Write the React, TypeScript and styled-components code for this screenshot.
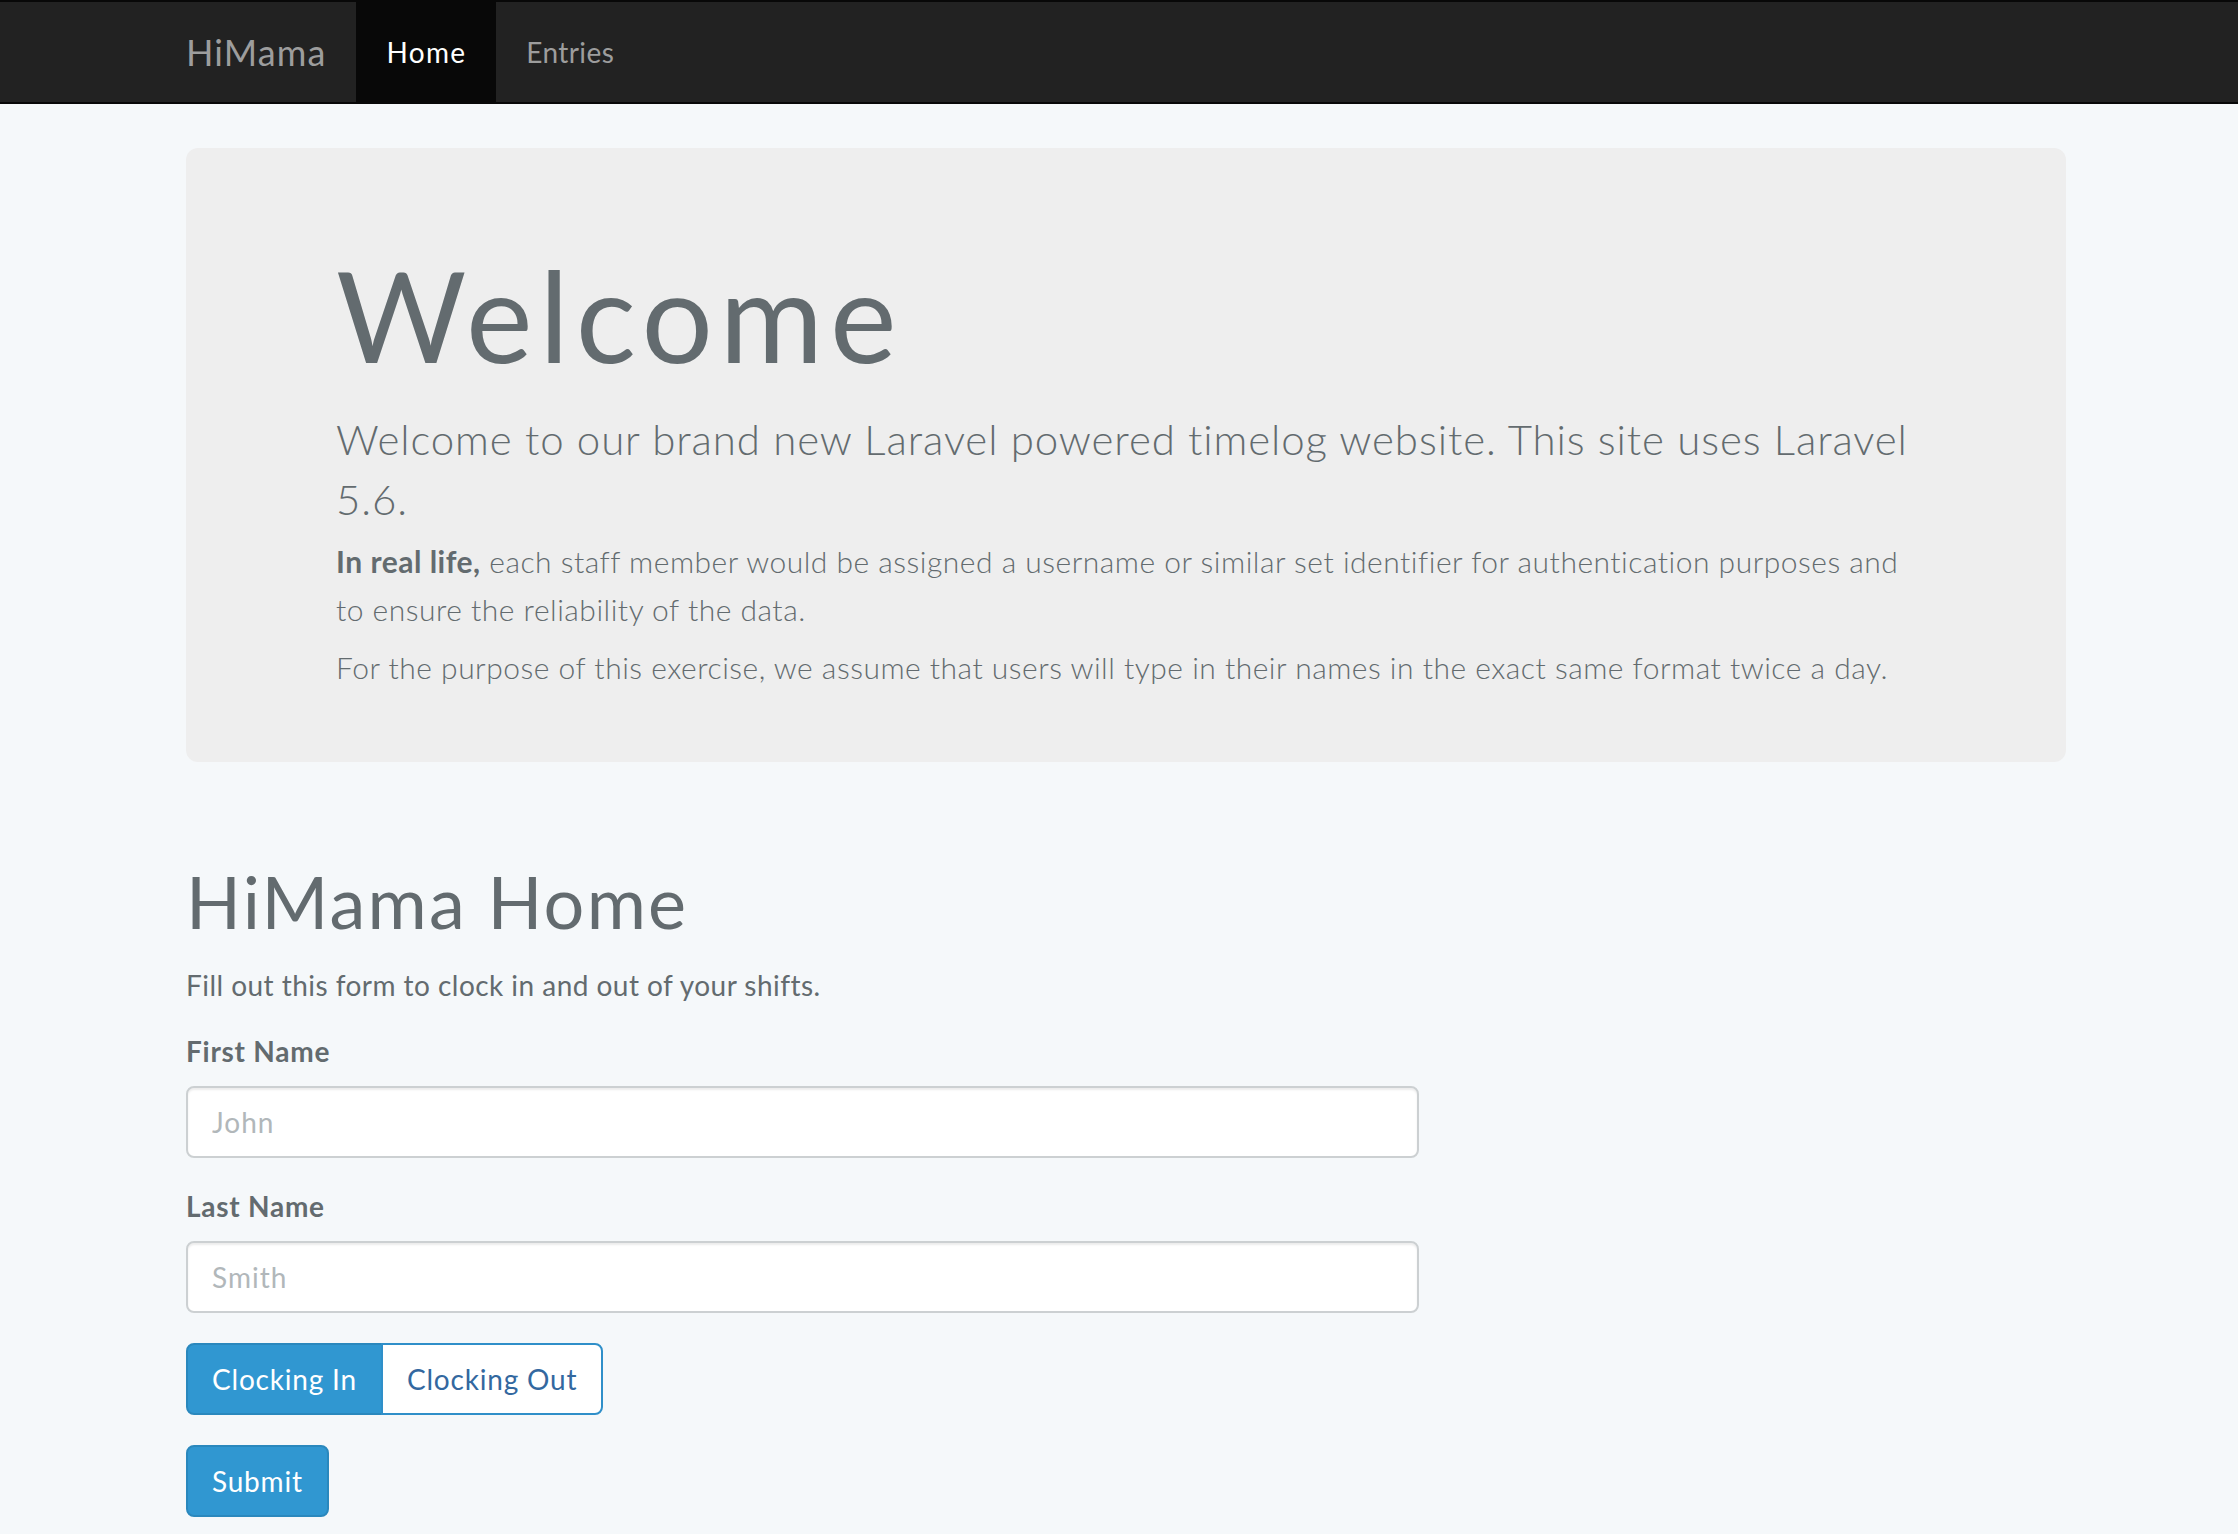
import React from "react";
import styled, { createGlobalStyle } from "styled-components";

const GlobalStyle = createGlobalStyle`
  * { box-sizing: border-box; }
  html, body { margin: 0; padding: 0; }
  body {
    background: #f5f8fa;
    color: #636b6f;
    font-family: Lato, "Open Sans", "Liberation Sans", sans-serif;
    font-size: 28px;
    line-height: 1.6;
    letter-spacing: 0.46px;
    min-height: 1534px;
  }
`;

const Navbar = styled.nav`
  background: #222;
  border-top: 2px solid #080808;
  border-bottom: 2px solid #080808;
  height: 104px;
`;

const Container = styled.div`
  width: 1880px;
  margin-left: calc(50% - 933px);
`;

const NavInner = styled(Container)`
  display: flex;
  align-items: stretch;
  height: 100px;
  margin-left: calc(50% - 963px);
`;

const Brand = styled.a`
  display: block;
  padding: 30px;
  font-size: 36px;
  line-height: 40px;
  letter-spacing: 1.1px;
  color: #9d9d9d;
  text-decoration: none;
`;

const NavList = styled.ul`
  display: flex;
  list-style: none;
  margin: 0;
  padding: 0;
`;

const NavLink = styled.a<{ $active?: boolean }>`
  display: block;
  padding: 30px;
  font-size: 28px;
  line-height: 40px;
  letter-spacing: ${(p) => (p.$active ? "1.3px" : "0.4px")};
  text-decoration: none;
  color: ${(p) => (p.$active ? "#fff" : "#9d9d9d")};
  background: ${(p) => (p.$active ? "#080808" : "transparent")};
`;

const Jumbotron = styled.section`
  margin-top: 44px;
  margin-bottom: 60px;
  background: #eee;
  border-radius: 12px;
  padding: 96px 150px 62px;
  height: 614px;
`;

const JumboTitle = styled.h1`
  margin: 2px 0 24px;
  font-size: 126px;
  line-height: 1.1;
  font-weight: 400;
  letter-spacing: 6.7px;
  color: #636b6f;
`;

const Lead = styled.p`
  margin: 0 0 8px;
  font-size: 42px;
  line-height: 60px;
  font-weight: 300;
  letter-spacing: 0.9px;
`;

const JumboText = styled.p`
  margin: 0 0 10px;
  font-size: 30px;
  line-height: 48px;
  font-weight: 300;
  letter-spacing: 0.5px;

  strong { font-weight: 700; }
`;

const FormColumn = styled.div`
  width: 1233px;
  padding-top: 40px;
`;

const PageTitle = styled.h1`
  margin: 0 0 22px;
  font-size: 72px;
  line-height: 1.1;
  font-weight: 400;
  letter-spacing: 2.2px;
  color: #636b6f;
`;

const Intro = styled.p`
  margin: 0 0 21px;
`;

const FormGroup = styled.div`
  margin-bottom: 26px;
`;

const Label = styled.label`
  display: block;
  margin-bottom: 12px;
  font-weight: 700;
  letter-spacing: 0.74px;
`;

const Input = styled.input`
  display: block;
  width: 100%;
  height: 72px;
  padding: 12px 24px;
  font-family: inherit;
  font-size: 28px;
  letter-spacing: 1px;
  color: #555;
  background: #fff;
  border: 2px solid #ccd0d2;
  border-radius: 8px;
  box-shadow: inset 0 2px 2px rgba(0, 0, 0, 0.075);
  outline: none;

  &::placeholder { color: #b1b7ba; }
`;

const ButtonGroup = styled.div`
  display: flex;
  width: fit-content;
  margin-top: 30px;
`;

const Button = styled.button<{ $primary?: boolean; $pos?: "left" | "right" | "single" }>`
  display: block;
  font-family: inherit;
  font-size: 28px;
  line-height: 44px;
  letter-spacing: 0.8px;
  padding: 12px 24px;
  border: 2px solid ${(p) => (p.$primary ? "#2a88bd" : "#2f8fc9")};
  background: ${(p) => (p.$primary ? "#3097d1" : "#fff")};
  color: ${(p) => (p.$primary ? "#fff" : "#33689f")};
  cursor: pointer;
  border-radius: ${(p) =>
    p.$pos === "left" ? "8px 0 0 8px" : p.$pos === "right" ? "0 8px 8px 0" : "8px"};
  margin-left: ${(p) => (p.$pos === "right" ? "-2px" : "0")};
`;

const SubmitRow = styled.div`
  display: flex;
  margin-top: 30px;
`;

export default function App() {
  return (
    <>
      <GlobalStyle />
      <Navbar>
        <NavInner>
          <Brand href="#">HiMama</Brand>
          <NavList>
            <li><NavLink href="#" $active>Home</NavLink></li>
            <li><NavLink href="#">Entries</NavLink></li>
          </NavList>
        </NavInner>
      </Navbar>
      <Container>
        <Jumbotron>
          <JumboTitle>Welcome</JumboTitle>
          <Lead>
            Welcome to our brand new Laravel powered timelog website. This site uses Laravel 5.6.
          </Lead>
          <JumboText>
            <strong>In real life,</strong> each staff member would be assigned a username or similar set
            identifier for authentication purposes and to ensure the reliability of the data.
          </JumboText>
          <JumboText>
            For the purpose of this exercise, we assume that users will type in their names in the exact
            same format twice a day.
          </JumboText>
        </Jumbotron>
        <FormColumn>
          <PageTitle>HiMama Home</PageTitle>
          <Intro>Fill out this form to clock in and out of your shifts.</Intro>
          <form onSubmit={(e) => e.preventDefault()}>
            <FormGroup>
              <Label htmlFor="first">First Name</Label>
              <Input id="first" placeholder="John" />
            </FormGroup>
            <FormGroup>
              <Label htmlFor="last">Last Name</Label>
              <Input id="last" placeholder="Smith" />
            </FormGroup>
            <ButtonGroup>
              <Button type="button" $primary $pos="left">Clocking In</Button>
              <Button type="button" $pos="right">Clocking Out</Button>
            </ButtonGroup>
            <SubmitRow>
              <Button type="submit" $primary $pos="single">Submit</Button>
            </SubmitRow>
          </form>
        </FormColumn>
      </Container>
    </>
  );
}
